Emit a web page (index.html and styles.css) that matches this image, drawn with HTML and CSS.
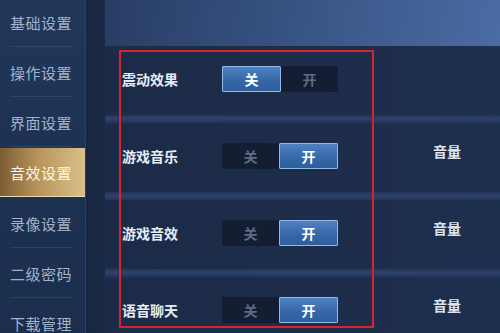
FILE: index.html
```html
<!DOCTYPE html>
<html lang="zh">
<head>
    <meta charset="UTF-8">
    <title>音效设置</title>
    <link rel="stylesheet" href="styles.css">
</head>
<body>
    <div class="screen">
        <ul class="side-menu">
            <li class="menu-item">基础设置</li>
            <li class="menu-item">操作设置</li>
            <li class="menu-item">界面设置</li>
            <li class="menu-item active">音效设置</li>
            <li class="menu-item">录像设置</li>
            <li class="menu-item">二级密码</li>
            <li class="menu-item">下载管理</li>
        </ul>
        <div class="gutter"></div>
        <div class="main">
            <div class="top-bar"></div>
            <div class="settings">
                <div class="row">
                    <span class="label">震动效果</span>
                    <div class="switch">
                        <span class="opt on">关</span>
                        <span class="opt">开</span>
                    </div>
                </div>
                <div class="sep"></div>
                <div class="row">
                    <span class="label">游戏音乐</span>
                    <div class="switch">
                        <span class="opt">关</span>
                        <span class="opt on">开</span>
                    </div>
                    <span class="volume">音量</span>
                </div>
                <div class="sep"></div>
                <div class="row">
                    <span class="label">游戏音效</span>
                    <div class="switch">
                        <span class="opt">关</span>
                        <span class="opt on">开</span>
                    </div>
                    <span class="volume">音量</span>
                </div>
                <div class="sep"></div>
                <div class="row">
                    <span class="label">语音聊天</span>
                    <div class="switch">
                        <span class="opt">关</span>
                        <span class="opt on">开</span>
                    </div>
                    <span class="volume">音量</span>
                </div>
                <!-- highlight frame drawn over the rows -->
                <div class="mark-box"></div>
            </div>
        </div>
    </div>
</body>
</html>
```

FILE: styles.css
```css
body {
    margin: 0;
    font-family: "Noto Sans CJK SC", "Noto Sans", sans-serif;
    background-color: #1b2a45;
    overflow: hidden;
}
.screen {
    display: flex;
    width: 500px;
    height: 333px;
    overflow: hidden;
}
.side-menu {
    list-style: none;
    margin: -3px 0 0 0;
    padding: 0;
    width: 85px;
    flex-shrink: 0;
    background: linear-gradient(180deg, #213659, #1d3152 60%, #1b2e4d);
}
.menu-item {
    height: 50px;
    display: flex;
    align-items: center;
    padding-left: 10px;
    font-size: 15px;
    color: #a3b3cc;
    letter-spacing: 0.5px;
    position: relative;
}
.menu-item::after {
    content: "";
    position: absolute;
    left: 10px;
    right: 13px;
    bottom: 0;
    height: 1px;
    background-color: rgba(120, 150, 195, 0.18);
}
.menu-item.active {
    height: 48px;
    margin: 1px 0;
    color: #fbf6ea;
    background: linear-gradient(90deg, #7c5d34, #b8955a 45%, #d9c189);
    border-bottom: 1px solid #efdca8;
}
.menu-item.active::after {
    display: none;
}
.gutter {
    width: 19px;
    flex-shrink: 0;
    background: linear-gradient(90deg, #172640, #1a2a46);
    border-left: 1px solid #2a3f62;
}
.main {
    flex: 1;
    display: flex;
    flex-direction: column;
}
.top-bar {
    height: 46px;
    flex-shrink: 0;
    background: linear-gradient(100deg, #283d64, #3a5788 55%, #4b6ba3);
}
.settings {
    position: relative;
    flex: 1;
    background-color: #1b2a45;
}
.row {
    height: 69px;
    display: flex;
    align-items: center;
    padding-left: 17px;
    background: linear-gradient(90deg, #1c2b47, #1d2d4b 70%, #1e3050);
}
.sep {
    height: 8px;
    background: linear-gradient(180deg, #24375a, #2c4269 50%, #22345a);
}
.label {
    width: 100px;
    font-size: 14px;
    font-weight: bold;
    color: #e6ecf5;
    margin-top: -3px;
}
.switch {
    display: flex;
    width: 116px;
    height: 26px;
    background-color: #141e32;
    margin-top: -4px;
}
.opt {
    flex: 1;
    display: flex;
    justify-content: center;
    align-items: center;
    font-size: 14px;
    font-weight: bold;
    color: #5f6b80;
}
.opt.on {
    color: #ffffff;
    background: linear-gradient(180deg, #4f82c2, #3566a6 60%, #2f5e9c);
    border: 1px solid #93b9e8;
    box-sizing: border-box;
    border-radius: 1px;
}
.volume {
    margin-left: 95px;
    margin-top: -14px;
    font-size: 14px;
    font-weight: bold;
    color: #dde4ee;
}
.mark-box {
    position: absolute;
    left: 14px;
    top: 4px;
    width: 251px;
    height: 274px;
    border: 2px solid #d8232e;
}
```
